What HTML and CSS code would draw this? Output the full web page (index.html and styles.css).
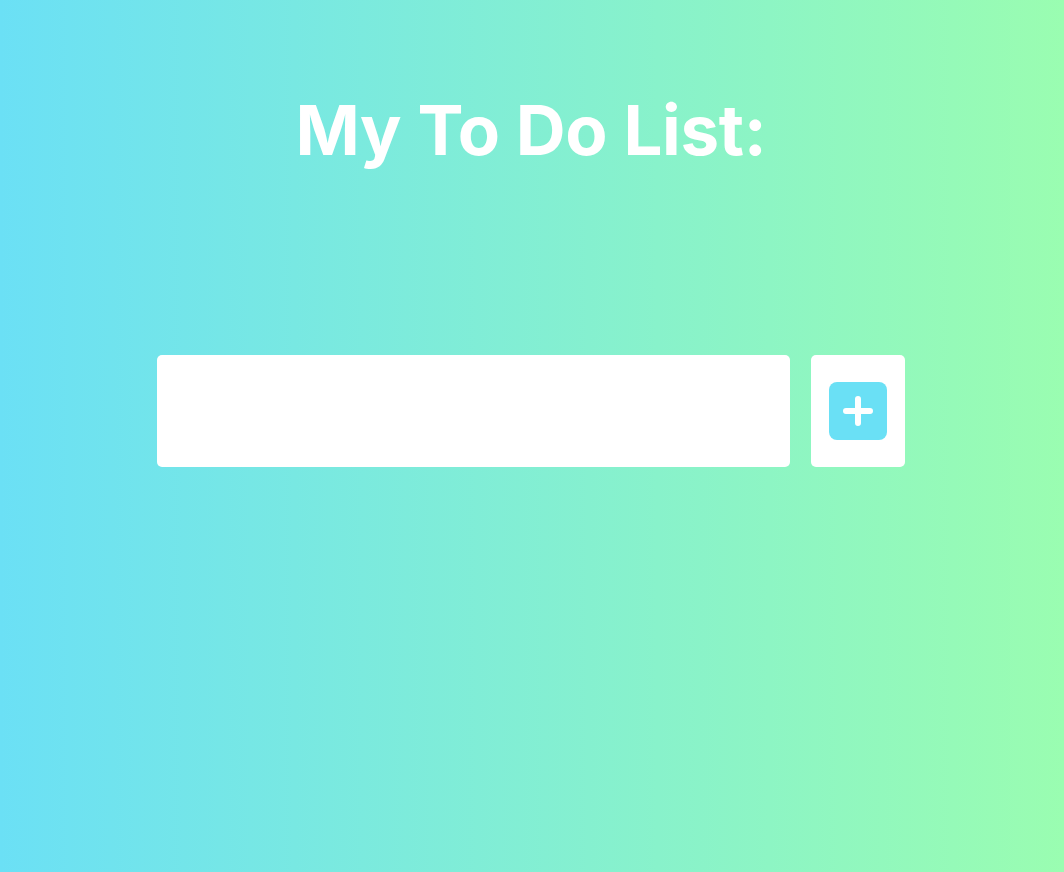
FILE: index.html
```html
<!DOCTYPE html>
<html lang="en">
<head>
<meta charset="utf-8">
<title>My To Do List</title>
<link rel="stylesheet" href="styles.css">
</head>
<body>
<main class="app">
  <h1 class="title">My To Do List:</h1>
  <form class="todo-form" onsubmit="return false;">
    <input class="todo-input" type="text" aria-label="New task">
    <button class="add-btn" type="submit" aria-label="Add task">
      <span class="add-icon">
        <svg width="30" height="30" viewBox="0 0 30 30" aria-hidden="true">
          <path d="M15 3 V27 M3 15 H27" stroke="#ffffff" stroke-width="6" stroke-linecap="round" fill="none"/>
        </svg>
      </span>
    </button>
  </form>
</main>
</body>
</html>
```
FILE: styles.css
```css
html, body {
  margin: 0;
  padding: 0;
}
body {
  min-height: 100vh;
  background: linear-gradient(to right, #6be0f5, #9afdb1);
  font-family: Inter, "Open Sans", sans-serif;
}
.app {
  display: flex;
  flex-direction: column;
  align-items: center;
  padding-top: 88px;
  padding-right: 2px;
}
.title {
  margin: 0;
  color: #ffffff;
  font-size: 69px;
  font-weight: 700;
  line-height: 84px;
  letter-spacing: -0.3px;
}
.todo-form {
  display: flex;
  gap: 21px;
  margin-top: 183px;
}
.todo-input {
  width: 633px;
  height: 112px;
  box-sizing: border-box;
  border: none;
  border-radius: 5px;
  background: #ffffff;
  padding: 0 20px;
  font-size: 24px;
  outline: none;
}
.add-btn {
  width: 94px;
  height: 112px;
  border: none;
  border-radius: 5px;
  background: #ffffff;
  padding: 0;
  display: flex;
  align-items: center;
  justify-content: center;
  cursor: pointer;
}
.add-icon {
  width: 58px;
  height: 58px;
  border-radius: 8px;
  background: #6ae0f5;
  display: flex;
  align-items: center;
  justify-content: center;
}
```
